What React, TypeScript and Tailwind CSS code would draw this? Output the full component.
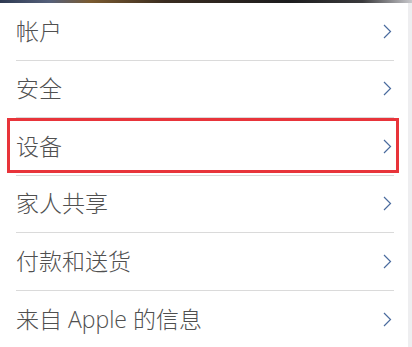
import React from "react";

const items = ["帐户", "安全", "设备", "家人共享", "付款和送货", "来自 Apple 的信息"];

function Chevron() {
  return (
    <svg width="9" height="15" viewBox="0 0 9 15" className="shrink-0">
      <path d="M1 1 L7.5 7.5 L1 14" fill="none" stroke="#4a6b9e" strokeWidth="1.2" />
    </svg>
  );
}

export default function App() {
  return (
    <div className="relative h-[347px] w-[412px] overflow-hidden bg-white font-['Open_Sans','Noto_Sans_CJK_SC',sans-serif]">
      <div className="h-[3px] w-full bg-[linear-gradient(90deg,#2e3a52_0%,#55607a_12%,#7a5a30_22%,#3a2c20_40%,#1c1c1e_70%,#3a3a3c_88%,#c8c8cc_100%)]" />
      <div className="flex">
        <ul className="w-[408px]">
          {items.map((label, i) => (
            <li key={label} className="pl-4 pr-[14px]">
              <div
                className={
                  "flex h-[57.5px] items-center justify-between " +
                  (i < items.length - 1 ? "border-b border-[#dadada]" : "")
                }
              >
                <span className="pr-2 text-[23px] font-light leading-none text-[#505050]">{label}</span>
                <span className="pr-[2px]">
                  <Chevron />
                </span>
              </div>
            </li>
          ))}
        </ul>
        <div className="h-[344px] flex-1 bg-[#eeeef0]" />
      </div>
      <div className="pointer-events-none absolute left-[7px] top-[118px] h-[55px] w-[392px] border-[3px] border-[#e8343a]" />
    </div>
  );
}
